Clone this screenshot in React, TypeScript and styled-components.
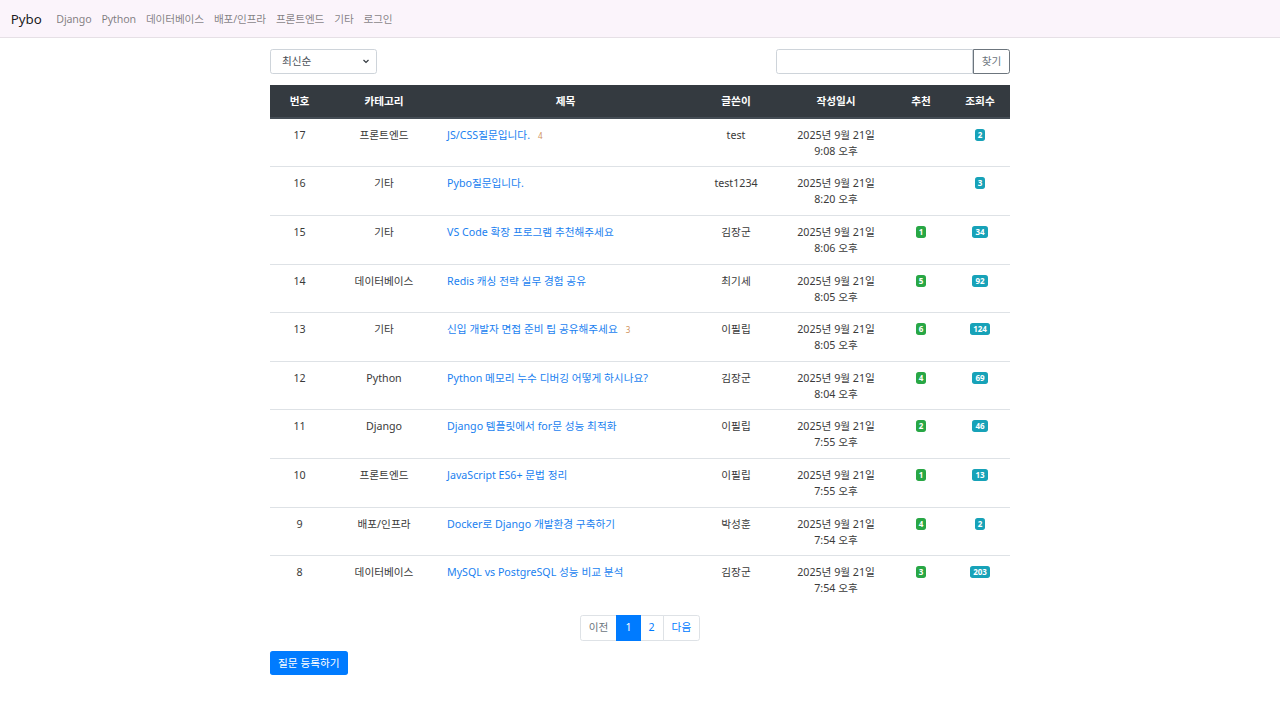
import React from "react";
import styled, { createGlobalStyle } from "styled-components";

const Global = createGlobalStyle`
  * { box-sizing: border-box; }
  body {
    margin: 0;
    background: #fff;
    font-family: "Noto Sans", "Noto Sans CJK KR", sans-serif;
    font-size: 10.67px;
    line-height: 16px;
    color: #212529;
  }
`;

const Navbar = styled.nav`
  height: 38px;
  display: flex;
  align-items: center;
  padding: 0 10.67px;
  background: #fbf4fb;
  border-bottom: 1px solid #e6e0e6;
`;

const Brand = styled.a`
  font-size: 13.33px;
  color: rgba(0, 0, 0, 0.9);
  margin-right: 9.5px;
  text-decoration: none;
`;

const NavLink = styled.a`
  color: rgba(0, 0, 0, 0.5);
  padding: 0 5px;
  letter-spacing: -0.15px;
  text-decoration: none;
`;

const Container = styled.main`
  width: 740px;
  margin: 10.67px auto;
`;

const Toolbar = styled.div`
  display: flex;
  justify-content: space-between;
  align-items: center;
  margin-bottom: 10.67px;
`;

const Select = styled.div`
  width: 107px;
  height: 25.3px;
  border: 1px solid #ced4da;
  border-radius: 2.67px;
  padding: 0 6px 0 11px;
  display: flex;
  align-items: center;
  justify-content: space-between;
  color: #495057;
`;

const SearchGroup = styled.div`
  display: flex;
  width: 234px;
  height: 25.3px;
`;

const SearchInput = styled.div`
  flex: 1;
  border: 1px solid #ced4da;
  border-radius: 2.67px 0 0 2.67px;
`;

const SearchButton = styled.button`
  width: 37px;
  border: 1px solid #6c757d;
  border-radius: 0 2.67px 2.67px 0;
  background: #fff;
  color: #6c757d;
  font: inherit;
  padding: 0;
`;

const Table = styled.table`
  width: 100%;
  border-collapse: collapse;
  margin-bottom: 10.67px;
  table-layout: fixed;
`;

const Th = styled.th`
  background: #343a40;
  color: #fff;
  font-weight: 700;
  text-align: center;
  padding: 8px;
  line-height: 16px;
  border-bottom: 2px solid #454d55;
`;

const Td = styled.td<{ $left?: boolean }>`
  padding: 8px 8px 7.65px;
  vertical-align: top;
  text-align: ${(p) => (p.$left ? "left" : "center")};
  border-top: 1px solid #dee2e6;
  line-height: 16px;
  color: #3a3a3a;
`;

const DateText = styled.div`
  height: 32px;
`;

const TitleLink = styled.a`
  color: #1a7ff0;
  text-decoration: none;
`;

const AnswerCount = styled.span`
  color: #d0925a;
  font-size: 8px;
  margin-left: 8px;
`;

const Badge = styled.span<{ $tone: "green" | "info" }>`
  display: inline-block;
  font-size: 8px;
  font-weight: 700;
  line-height: 1;
  padding: 2px 3.2px;
  border-radius: 2.67px;
  color: #fff;
  background: ${(p) => (p.$tone === "green" ? "#28a745" : "#17a2b8")};
  vertical-align: 1px;
`;

const Pagination = styled.ul`
  display: flex;
  justify-content: center;
  list-style: none;
  padding: 0;
  margin: 0 0 10.67px;
`;

const PageItem = styled.li<{ $active?: boolean; $disabled?: boolean; $first?: boolean; $last?: boolean }>`
  padding: 5.33px 8px;
  line-height: 13.33px;
  border: 1px solid ${(p) => (p.$active ? "#007bff" : "#dee2e6")};
  margin-left: ${(p) => (p.$first ? "0" : "-1px")};
  background: ${(p) => (p.$active ? "#007bff" : "#fff")};
  color: ${(p) => (p.$active ? "#fff" : p.$disabled ? "#6c757d" : "#007bff")};
  border-radius: ${(p) => (p.$first ? "2.67px 0 0 2.67px" : p.$last ? "0 2.67px 2.67px 0" : "0")};
  position: relative;
  z-index: ${(p) => (p.$active ? 1 : 0)};
`;

const PrimaryButton = styled.a`
  display: inline-block;
  background: #007bff;
  color: #fff;
  padding: 4px 8px;
  border-radius: 2.67px;
  line-height: 16px;
  text-decoration: none;
`;

type Row = {
  no: number;
  cat: string;
  title: string;
  answers?: number;
  author: string;
  time: string;
  vote?: number;
  views: number;
};

const rows: Row[] = [
  { no: 17, cat: "프론트엔드", title: "JS/CSS질문입니다.", answers: 4, author: "test", time: "9:08 오후", views: 2 },
  { no: 16, cat: "기타", title: "Pybo질문입니다.", author: "test1234", time: "8:20 오후", views: 3 },
  { no: 15, cat: "기타", title: "VS Code 확장 프로그램 추천해주세요", author: "김장군", time: "8:06 오후", vote: 1, views: 34 },
  { no: 14, cat: "데이터베이스", title: "Redis 캐싱 전략 실무 경험 공유", author: "최기세", time: "8:05 오후", vote: 5, views: 92 },
  { no: 13, cat: "기타", title: "신입 개발자 면접 준비 팁 공유해주세요", answers: 3, author: "이필립", time: "8:05 오후", vote: 6, views: 124 },
  { no: 12, cat: "Python", title: "Python 메모리 누수 디버깅 어떻게 하시나요?", author: "김장군", time: "8:04 오후", vote: 4, views: 69 },
  { no: 11, cat: "Django", title: "Django 템플릿에서 for문 성능 최적화", author: "이필립", time: "7:55 오후", vote: 2, views: 46 },
  { no: 10, cat: "프론트엔드", title: "JavaScript ES6+ 문법 정리", author: "이필립", time: "7:55 오후", vote: 1, views: 13 },
  { no: 9, cat: "배포/인프라", title: "Docker로 Django 개발환경 구축하기", author: "박성훈", time: "7:54 오후", vote: 4, views: 2 },
  { no: 8, cat: "데이터베이스", title: "MySQL vs PostgreSQL 성능 비교 분석", author: "김장군", time: "7:54 오후", vote: 3, views: 203 },
];

const Chevron = () => (
  <svg width="8" height="8" viewBox="0 0 8 8">
    <path d="M1.5 3 L4 5.5 L6.5 3" fill="none" stroke="#343a40" strokeWidth="1.2" />
  </svg>
);

export default function App() {
  return (
    <>
      <Global />
      <Navbar>
        <Brand>Pybo</Brand>
        {["Django", "Python", "데이터베이스", "배포/인프라", "프론트엔드", "기타", "로그인"].map((l) => (
          <NavLink key={l}>{l}</NavLink>
        ))}
      </Navbar>
      <Container>
        <Toolbar>
          <Select>
            <span>최신순</span>
            <Chevron />
          </Select>
          <SearchGroup>
            <SearchInput />
            <SearchButton>찾기</SearchButton>
          </SearchGroup>
        </Toolbar>
        <Table>
          <colgroup>
            <col style={{ width: 59 }} />
            <col style={{ width: 110 }} />
            <col style={{ width: 253 }} />
            <col style={{ width: 88 }} />
            <col style={{ width: 112 }} />
            <col style={{ width: 58 }} />
            <col style={{ width: 60 }} />
          </colgroup>
          <thead>
            <tr>
              {["번호", "카테고리", "제목", "글쓴이", "작성일시", "추천", "조회수"].map((h) => (
                <Th key={h}>{h}</Th>
              ))}
            </tr>
          </thead>
          <tbody>
            {rows.map((r) => (
              <tr key={r.no}>
                <Td>{r.no}</Td>
                <Td>{r.cat}</Td>
                <Td $left>
                  <TitleLink>{r.title}</TitleLink>
                  {r.answers ? <AnswerCount>{r.answers}</AnswerCount> : null}
                </Td>
                <Td>{r.author}</Td>
                <Td>
                  <DateText>
                    2025년 9월 21일
                    <br />
                    {r.time}
                  </DateText>
                </Td>
                <Td>{r.vote ? <Badge $tone="green">{r.vote}</Badge> : null}</Td>
                <Td>
                  <Badge $tone="info">{r.views}</Badge>
                </Td>
              </tr>
            ))}
          </tbody>
        </Table>
        <Pagination>
          <PageItem $first $disabled>이전</PageItem>
          <PageItem $active>1</PageItem>
          <PageItem>2</PageItem>
          <PageItem $last>다음</PageItem>
        </Pagination>
        <PrimaryButton>질문 등록하기</PrimaryButton>
      </Container>
    </>
  );
}
